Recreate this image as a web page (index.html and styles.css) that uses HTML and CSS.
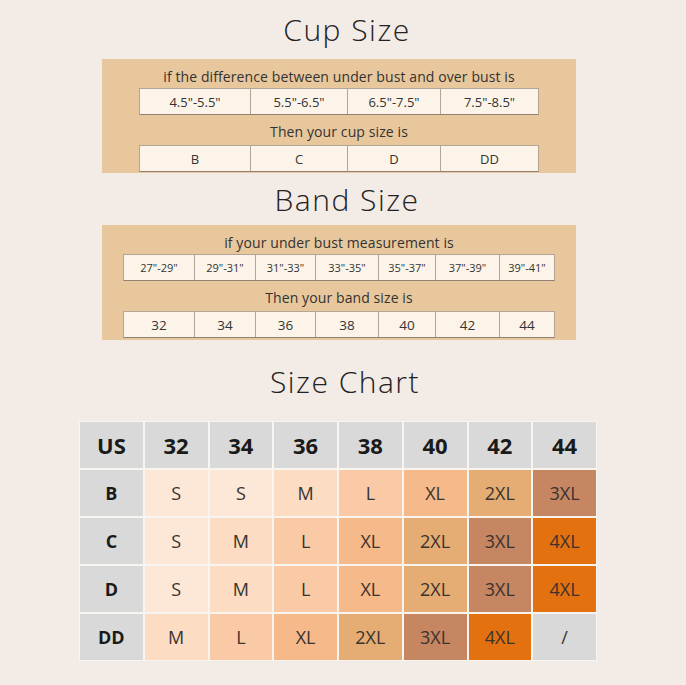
FILE: index.html
```html
<!DOCTYPE html>
<html>
<head>
<meta charset="utf-8">
<link rel="stylesheet" href="styles.css">
</head>
<body>
<div class="page">
  <h1 class="title title-cup">Cup Size</h1>
  <section class="box box-cup">
    <p class="caption cap-top">if the difference between under bust and over bust is</p>
    <div class="row cup-row">
      <div class="cell">4.5"-5.5"</div>
      <div class="cell">5.5"-6.5"</div>
      <div class="cell">6.5"-7.5"</div>
      <div class="cell">7.5"-8.5"</div>
    </div>
    <p class="caption cap-mid">Then your cup size is</p>
    <div class="row cup-row">
      <div class="cell">B</div>
      <div class="cell">C</div>
      <div class="cell">D</div>
      <div class="cell">DD</div>
    </div>
  </section>

  <h1 class="title title-band">Band Size</h1>
  <section class="box box-band">
    <p class="caption cap-top">if your under bust measurement is</p>
    <div class="row band-row small">
      <div class="cell">27"-29"</div>
      <div class="cell">29"-31"</div>
      <div class="cell">31"-33"</div>
      <div class="cell">33"-35"</div>
      <div class="cell">35"-37"</div>
      <div class="cell">37"-39"</div>
      <div class="cell">39"-41"</div>
    </div>
    <p class="caption cap-mid">Then your band size is</p>
    <div class="row band-row">
      <div class="cell">32</div>
      <div class="cell">34</div>
      <div class="cell">36</div>
      <div class="cell">38</div>
      <div class="cell">40</div>
      <div class="cell">42</div>
      <div class="cell">44</div>
    </div>
  </section>

  <h1 class="title title-chart">Size Chart</h1>
  <div class="chart">
    <div class="h">US</div><div class="h">32</div><div class="h">34</div><div class="h">36</div><div class="h">38</div><div class="h">40</div><div class="h">42</div><div class="h">44</div>

    <div class="rl">B</div><div class="s-s">S</div><div class="s-s">S</div><div class="s-m">M</div><div class="s-l">L</div><div class="s-xl">XL</div><div class="s-2xl">2XL</div><div class="s-3xl">3XL</div>

    <div class="rl">C</div><div class="s-s">S</div><div class="s-m">M</div><div class="s-l">L</div><div class="s-xl">XL</div><div class="s-2xl">2XL</div><div class="s-3xl">3XL</div><div class="s-4xl">4XL</div>

    <div class="rl">D</div><div class="s-s">S</div><div class="s-m">M</div><div class="s-l">L</div><div class="s-xl">XL</div><div class="s-2xl">2XL</div><div class="s-3xl">3XL</div><div class="s-4xl">4XL</div>

    <div class="rl">DD</div><div class="s-m">M</div><div class="s-l">L</div><div class="s-xl">XL</div><div class="s-2xl">2XL</div><div class="s-3xl">3XL</div><div class="s-4xl">4XL</div><div class="s-na">/</div>
  </div>
</div>
</body>
</html>
```
FILE: styles.css
```css
html, body {
  margin: 0;
  padding: 0;
  background: #f3ebe6;
}
.page {
  width: 686px;
  height: 685px;
  display: flex;
  flex-direction: column;
  align-items: center;
  font-family: "Open Sans", "Liberation Sans", sans-serif;
  color: #2e2a28;
}
.title {
  margin: 0 0 0 8px;
  font-family: "Open Sans", sans-serif;
  font-weight: 300;
  font-size: 30px;
  letter-spacing: 1.5px;
  color: #222;
  text-align: center;
  display: flex;
  align-items: center;
  justify-content: center;
}
.title-cup { height: 59px; }
.title-band { height: 52px; }
.title-chart { height: 81px; padding-top: 2px; box-sizing: border-box; margin-left: 4px; }

.box {
  width: 474px;
  margin-right: 8px;
  background: #e8c79c;
  display: flex;
  flex-direction: column;
  align-items: center;
  box-sizing: border-box;
}
.box-cup { height: 114px; }
.box-band { height: 115px; padding-bottom: 2px; }

.caption {
  margin: 0;
  font-size: 14px;
  color: #333;
  display: flex;
  align-items: center;
  justify-content: center;
  letter-spacing: 0.1px;
}
.cap-top { height: 29px; padding-top: 5px; box-sizing: border-box; }
.cap-mid { height: 30px; padding-top: 3px; box-sizing: border-box; }

.row {
  display: grid;
  height: 27px;
  background: #fcf4e8;
  border: 1px solid #b3a696;
  border-bottom-color: #8f8272;
  box-sizing: border-box;
}
.cup-row {
  width: 400px;
  grid-template-columns: 110px 97px 93px 1fr;
}
.band-row {
  width: 432px;
  grid-template-columns: 70px 61px 60px 63px 57px 64px 1fr;
}
.cell {
  display: flex;
  align-items: center;
  justify-content: center;
  font-size: 13px;
  color: #333;
  border-left: 1px solid #b3a696;
}
.cell:first-child { border-left: none; }
.band-row .cell { font-size: 13.5px; }
.band-row.small .cell { font-size: 11px; }

.chart {
  width: 518px;
  height: 240px;
  margin-right: 10px;
  box-sizing: border-box;
  display: grid;
  grid-template-columns: repeat(8, 1fr);
  grid-template-rows: repeat(5, 1fr);
  gap: 2px;
  padding: 1px;
  background: #f8f5f1;
}
.chart > div {
  display: flex;
  align-items: center;
  justify-content: center;
  font-size: 18px;
  color: #3a3230;
}
.chart .h {
  background: #d9d9d9;
  font-weight: 700;
  font-size: 22px;
  color: #1a1a1a;
}
.chart .rl {
  background: #d9d9d9;
  font-weight: 700;
  font-size: 18px;
  color: #1a1a1a;
}
.chart .s-s { background: #fde8d8; }
.chart .s-m { background: #fcdcc3; }
.chart .s-l { background: #f9caa5; }
.chart .s-xl { background: #f5b98a; }
.chart .s-2xl { background: #e5ad74; }
.chart .s-3xl { background: #c68661; }
.chart .s-4xl { background: #e4710f; }
.chart .s-na { background: #d9d9d9; }
```
